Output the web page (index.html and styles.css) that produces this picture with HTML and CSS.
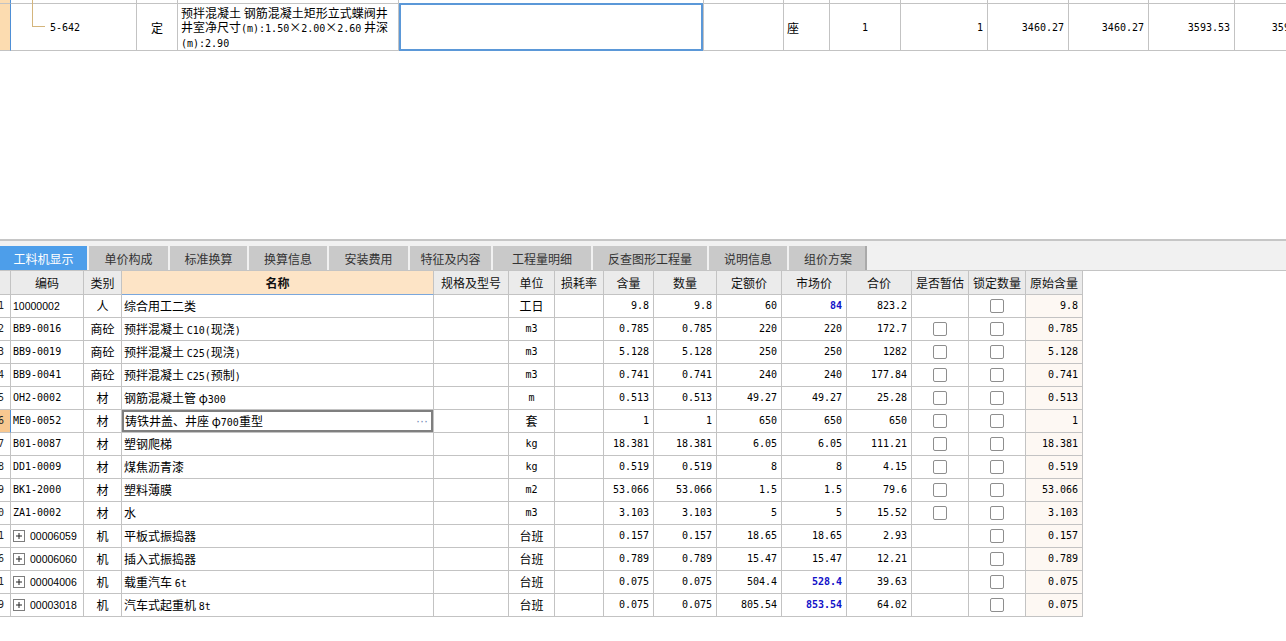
FILE: index.html
```html
<!DOCTYPE html>
<html lang="zh-CN">
<head>
<meta charset="utf-8">
<title>工料机显示</title>
<link rel="stylesheet" href="styles.css">
</head>
<body>
<div class="top">
  <div class="t stub sel"></div>
  <div class="t stub"></div>
  <div class="t stub"></div>
  <div class="t stub"></div>
  <div class="t stub"></div>
  <div class="t stub"></div>
  <div class="t stub"></div>
  <div class="t stub"></div>
  <div class="t stub"></div>
  <div class="t stub"></div>
  <div class="t stub"></div>
  <div class="t stub"></div>
  <div class="t stub"></div>

  <div class="t main sel"></div>
  <div class="t main tcode"><span class="tree"></span><span class="a">5-642</span></div>
  <div class="t main ctr">定</div>
  <div class="t main tname">预拌混凝土 钢筋混凝土矩形立式蝶阀井<br>井室净尺寸<span class="a">(m):1.50</span>×<span class="a">2.00</span>×<span class="a">2.60</span> 井深<br><span class="a">(m):2.90</span></div>
  <div class="t main edit"></div>
  <div class="t main"></div>
  <div class="t main">座</div>
  <div class="t main ctr a">1</div>
  <div class="t main r a">1</div>
  <div class="t main r a">3460.27</div>
  <div class="t main r a">3460.27</div>
  <div class="t main r a">3593.53</div>
  <div class="t main r a">3593.53</div>
</div>

<div class="blank"></div>
<div class="divider"></div>

<div class="tabbar">
  <div class="tab active w1">工料机显示</div>
  <div class="tab w2">单价构成</div>
  <div class="tab w3">标准换算</div>
  <div class="tab w4">换算信息</div>
  <div class="tab w5">安装费用</div>
  <div class="tab w6">特征及内容</div>
  <div class="tab w7">工程量明细</div>
  <div class="tab w8">反查图形工程量</div>
  <div class="tab w9">说明信息</div>
  <div class="tab w10 last">组价方案</div>
</div>

<div class="g">
  <div class="h"></div><div class="h">编码</div><div class="h">类别</div><div class="h hname">名称</div><div class="h">规格及型号</div><div class="h">单位</div><div class="h">损耗率</div><div class="h">含量</div><div class="h">数量</div><div class="h">定额价</div><div class="h">市场价</div><div class="h">合价</div><div class="h">是否暂估</div><div class="h">锁定数量</div><div class="h">原始含量</div>

  <div class="rn">1</div><div class="code s">10000002</div><div class="ctr">人</div><div>综合用工二类</div><div></div><div class="ctr">工日</div><div></div><div class="r a">9.8</div><div class="r a">9.8</div><div class="r a">60</div><div class="r a blue">84</div><div class="r a">823.2</div><div></div><div class="k"><span class="cb"></span></div><div class="r a orig">9.8</div>

  <div class="rn">2</div><div class="code a">BB9-0016</div><div class="ctr">商砼</div><div>预拌混凝土 <span class="a">C10(</span>现浇<span class="a">)</span></div><div></div><div class="ctr a">m3</div><div></div><div class="r a">0.785</div><div class="r a">0.785</div><div class="r a">220</div><div class="r a">220</div><div class="r a">172.7</div><div class="k"><span class="cb"></span></div><div class="k"><span class="cb"></span></div><div class="r a orig">0.785</div>

  <div class="rn">3</div><div class="code a">BB9-0019</div><div class="ctr">商砼</div><div>预拌混凝土 <span class="a">C25(</span>现浇<span class="a">)</span></div><div></div><div class="ctr a">m3</div><div></div><div class="r a">5.128</div><div class="r a">5.128</div><div class="r a">250</div><div class="r a">250</div><div class="r a">1282</div><div class="k"><span class="cb"></span></div><div class="k"><span class="cb"></span></div><div class="r a orig">5.128</div>

  <div class="rn">4</div><div class="code a">BB9-0041</div><div class="ctr">商砼</div><div>预拌混凝土 <span class="a">C25(</span>预制<span class="a">)</span></div><div></div><div class="ctr a">m3</div><div></div><div class="r a">0.741</div><div class="r a">0.741</div><div class="r a">240</div><div class="r a">240</div><div class="r a">177.84</div><div class="k"><span class="cb"></span></div><div class="k"><span class="cb"></span></div><div class="r a orig">0.741</div>

  <div class="rn">5</div><div class="code a">OH2-0002</div><div class="ctr">材</div><div>钢筋混凝土管 φ<span class="a">300</span></div><div></div><div class="ctr a">m</div><div></div><div class="r a">0.513</div><div class="r a">0.513</div><div class="r a">49.27</div><div class="r a">49.27</div><div class="r a">25.28</div><div class="k"><span class="cb"></span></div><div class="k"><span class="cb"></span></div><div class="r a orig">0.513</div>

  <div class="rn rsel">6</div><div class="code a">ME0-0052</div><div class="ctr">材</div><div class="editing">铸铁井盖、井座 φ<span class="a">700</span>重型<span class="dots">···</span></div><div></div><div class="ctr">套</div><div></div><div class="r a">1</div><div class="r a">1</div><div class="r a">650</div><div class="r a">650</div><div class="r a">650</div><div class="k"><span class="cb"></span></div><div class="k"><span class="cb"></span></div><div class="r a orig">1</div>

  <div class="rn">7</div><div class="code a">B01-0087</div><div class="ctr">材</div><div>塑钢爬梯</div><div></div><div class="ctr a">kg</div><div></div><div class="r a">18.381</div><div class="r a">18.381</div><div class="r a">6.05</div><div class="r a">6.05</div><div class="r a">111.21</div><div class="k"><span class="cb"></span></div><div class="k"><span class="cb"></span></div><div class="r a orig">18.381</div>

  <div class="rn">8</div><div class="code a">DD1-0009</div><div class="ctr">材</div><div>煤焦沥青漆</div><div></div><div class="ctr a">kg</div><div></div><div class="r a">0.519</div><div class="r a">0.519</div><div class="r a">8</div><div class="r a">8</div><div class="r a">4.15</div><div class="k"><span class="cb"></span></div><div class="k"><span class="cb"></span></div><div class="r a orig">0.519</div>

  <div class="rn">9</div><div class="code a">BK1-2000</div><div class="ctr">材</div><div>塑料薄膜</div><div></div><div class="ctr a">m2</div><div></div><div class="r a">53.066</div><div class="r a">53.066</div><div class="r a">1.5</div><div class="r a">1.5</div><div class="r a">79.6</div><div class="k"><span class="cb"></span></div><div class="k"><span class="cb"></span></div><div class="r a orig">53.066</div>

  <div class="rn">10</div><div class="code a">ZA1-0002</div><div class="ctr">材</div><div>水</div><div></div><div class="ctr a">m3</div><div></div><div class="r a">3.103</div><div class="r a">3.103</div><div class="r a">5</div><div class="r a">5</div><div class="r a">15.52</div><div class="k"><span class="cb"></span></div><div class="k"><span class="cb"></span></div><div class="r a orig">3.103</div>

  <div class="rn">11</div><div class="code s"><svg class="plus" width="12" height="12" viewBox="0 0 12 12"><rect x="0.5" y="0.5" width="11" height="11" fill="#fff" stroke="#7d7d7d"/><path d="M3 6h6M6 3v6" stroke="#222" stroke-width="1"/></svg>00006059</div><div class="ctr">机</div><div>平板式振捣器</div><div></div><div class="ctr">台班</div><div></div><div class="r a">0.157</div><div class="r a">0.157</div><div class="r a">18.65</div><div class="r a">18.65</div><div class="r a">2.93</div><div></div><div class="k"><span class="cb"></span></div><div class="r a orig">0.157</div>

  <div class="rn">16</div><div class="code s"><svg class="plus" width="12" height="12" viewBox="0 0 12 12"><rect x="0.5" y="0.5" width="11" height="11" fill="#fff" stroke="#7d7d7d"/><path d="M3 6h6M6 3v6" stroke="#222" stroke-width="1"/></svg>00006060</div><div class="ctr">机</div><div>插入式振捣器</div><div></div><div class="ctr">台班</div><div></div><div class="r a">0.789</div><div class="r a">0.789</div><div class="r a">15.47</div><div class="r a">15.47</div><div class="r a">12.21</div><div></div><div class="k"><span class="cb"></span></div><div class="r a orig">0.789</div>

  <div class="rn">21</div><div class="code s"><svg class="plus" width="12" height="12" viewBox="0 0 12 12"><rect x="0.5" y="0.5" width="11" height="11" fill="#fff" stroke="#7d7d7d"/><path d="M3 6h6M6 3v6" stroke="#222" stroke-width="1"/></svg>00004006</div><div class="ctr">机</div><div>载重汽车 <span class="a">6t</span></div><div></div><div class="ctr">台班</div><div></div><div class="r a">0.075</div><div class="r a">0.075</div><div class="r a">504.4</div><div class="r a blue">528.4</div><div class="r a">39.63</div><div></div><div class="k"><span class="cb"></span></div><div class="r a orig">0.075</div>

  <div class="rn">29</div><div class="code s"><svg class="plus" width="12" height="12" viewBox="0 0 12 12"><rect x="0.5" y="0.5" width="11" height="11" fill="#fff" stroke="#7d7d7d"/><path d="M3 6h6M6 3v6" stroke="#222" stroke-width="1"/></svg>00003018</div><div class="ctr">机</div><div>汽车式起重机 <span class="a">8t</span></div><div></div><div class="ctr">台班</div><div></div><div class="r a">0.075</div><div class="r a">0.075</div><div class="r a">805.54</div><div class="r a blue">853.54</div><div class="r a">64.02</div><div></div><div class="k"><span class="cb"></span></div><div class="r a orig">0.075</div>
</div>
</body>
</html>
```

FILE: styles.css
```css
html, body {
  margin: 0;
  padding: 0;
  width: 1286px;
  height: 641px;
  overflow: hidden;
  background: #fff;
}
body {
  font-family: "Noto Sans CJK SC", "Noto Sans", sans-serif;
  font-size: 12px;
  color: #000;
}

.a {
  font-family: "DejaVu Sans Mono", "Liberation Mono", monospace;
  font-size: 10px;
}
.s {
  font-family: "Liberation Sans", Arial, sans-serif;
  font-size: 10.5px;
}

/* ---------- top grid (upper table) ---------- */
.top {
  display: grid;
  grid-template-columns: 11px 126px 41px 221px 305px 80px 46px 71px 87px 81px 80px 86px 84px;
  grid-template-rows: 3px 48px;
  width: 1319px;
}
.t {
  box-sizing: border-box;
  border-right: 1px solid #c3c3c3;
  display: flex;
  align-items: center;
  white-space: nowrap;
  overflow: hidden;
  padding: 0 3px;
}
.t.stub { padding: 0; }
.t.main {
  border-top: 1px solid #c3c3c3;
  border-bottom: 1px solid #c3c3c3;
}
.t.sel {
  background: #fcdcb0;
  border-right: 1px solid #4e8fd6;
  padding: 0;
}
.t.ctr { justify-content: center; }
.t.r { justify-content: flex-end; padding-right: 4px; }
.tcode {
  position: relative;
  overflow: visible;
  padding-left: 39px;
}
.tree {
  position: absolute;
  left: 21px;
  top: -4px;
  width: 12px;
  height: 26px;
  border-left: 1px solid #d4b57c;
  border-bottom: 1px solid #d4b57c;
}
.t.tname {
  display: block;
  white-space: nowrap;
  line-height: 13.5px;
  padding: 2px 2px 0 3px;
}
.t.edit {
  border-top: none;
  border-bottom: none;
  box-shadow: inset 0 0 0 2px #5b98d8;
}

/* ---------- middle ---------- */
.blank { height: 188px; }
.divider { height: 2px; background: #c6c6c6; }

.tabbar {
  display: flex;
  gap: 2px;
  padding-top: 5px;
  height: 24px;
  background: #f1f1f1;
  border-bottom: 1px solid #c4c4c4;
}
.tab {
  height: 24px;
  display: flex;
  align-items: center;
  justify-content: center;
  background: #c9c9c9;
  color: #333;
  font-size: 12px;
}
.tab.active { background: #4d9eea; color: #fff; }
.tab.last { box-shadow: inset -2px 0 0 #a9a9a9; }
.w1 { width: 87px; }
.w2 { width: 79px; }
.w3 { width: 77px; }
.w4 { width: 78px; }
.w5 { width: 79px; }
.w6 { width: 81px; }
.w7 { width: 98px; }
.w8 { width: 114px; }
.w9 { width: 78px; }
.w10 { width: 78px; }

/* ---------- lower grid ---------- */
.g {
  display: grid;
  grid-template-columns: 11px 73px 38px 312px 75px 46px 49px 50px 63px 65px 65px 65px 57px 57px 57px;
  grid-template-rows: 24px;
  grid-auto-rows: 23px;
  width: 1083px;
}
.g > div {
  box-sizing: border-box;
  border-right: 1px solid #c3c3c3;
  border-bottom: 1px solid #c3c3c3;
  white-space: nowrap;
  overflow: hidden;
  line-height: 22px;
  padding: 0 2px;
}
.g > .h {
  background: #ebebeb;
  text-align: center;
  line-height: 23px;
  color: #111;
  padding: 0;
}
.g > .hname {
  background: #fde4c6;
  font-weight: bold;
  border-bottom: 1px solid #7aa7dc;
}
.g > .rn {
  display: flex;
  align-items: center;
  justify-content: flex-end;
  padding: 0 6px 0 0;
  font-family: "DejaVu Sans Mono", monospace;
  font-size: 10px;
  color: #222;
}
.g > .rsel {
  background: #f8c890;
  border-right-color: #4e8fd6;
}
.g > .code { padding-left: 2px; }
.g > .ctr { text-align: center; }
.g > .r { text-align: right; padding-right: 4px; }
.g > .k {
  display: flex;
  align-items: center;
  justify-content: center;
}
.g > .orig { background: #fdf8f3; }
.blue { color: #1010c8; font-weight: bold; }

.cb {
  width: 14px;
  height: 14px;
  box-sizing: border-box;
  border: 1px solid #8e8e8e;
  border-radius: 2px;
  background: #fff;
}
.plus {
  vertical-align: -2px;
  margin-right: 5px;
}
.g > .editing {
  box-shadow: inset 0 0 0 2px #7f7f7f;
  padding-left: 3px;
}
.dots {
  float: right;
  margin-right: 3px;
  font-family: "Liberation Sans", Arial, sans-serif;
  color: #6d84b3;
}
```
